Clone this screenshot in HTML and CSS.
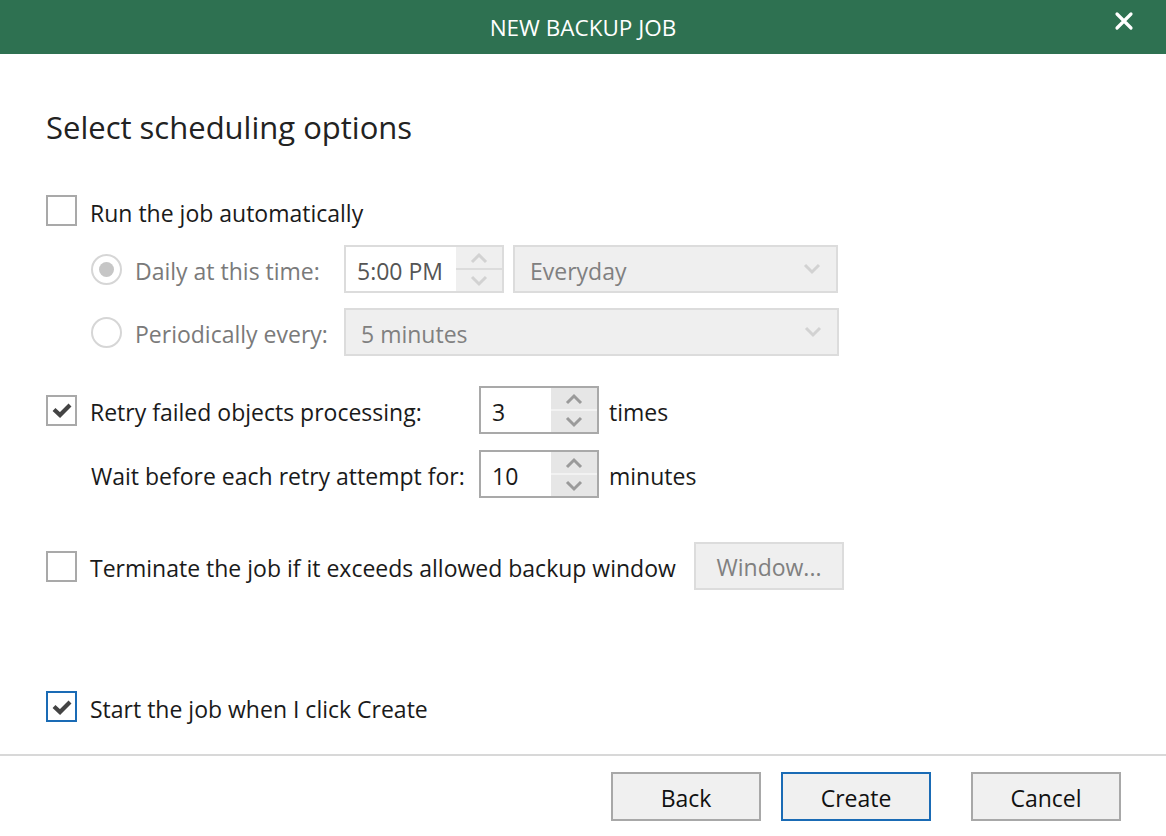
FILE: index.html
```html
<!DOCTYPE html>
<html lang="en">
<head>
    <meta charset="UTF-8">
    <meta name="viewport" content="width=device-width, initial-scale=1.0">
    <title>New Backup Job</title>
    <link rel="stylesheet" href="styles.css">
</head>
<body>
<div class="dialog">
    <div class="titlebar">
        <span class="title">NEW BACKUP JOB</span>
        <button class="close" aria-label="Close">
            <svg width="20" height="20" viewBox="0 0 20 20"><path d="M3 3 L17 17 M17 3 L3 17" stroke="#fff" stroke-width="3.2" stroke-linecap="round"/></svg>
        </button>
    </div>

    <div class="content">
        <h2 class="heading">Select scheduling options</h2>

        <div class="row row-auto">
            <span class="checkbox"></span>
            <span class="label">Run the job automatically</span>
        </div>

        <div class="row row-daily indent disabled">
            <span class="radio checked"></span>
            <span class="label radio-label">Daily at this time:</span>
            <div class="spin spin-time">
                <span class="spin-value">5:00 PM</span>
                <span class="spin-btns">
                    <span class="spin-up"><svg width="20" height="12" viewBox="0 0 20 12"><path d="M3 10 L10 3 L17 10" fill="none" stroke="currentColor" stroke-width="3"/></svg></span>
                    <span class="spin-down"><svg width="20" height="12" viewBox="0 0 20 12"><path d="M3 2 L10 9 L17 2" fill="none" stroke="currentColor" stroke-width="3"/></svg></span>
                </span>
            </div>
            <div class="select select-days">
                <span>Everyday</span>
                <svg width="20" height="12" viewBox="0 0 20 12"><path d="M3 2 L10 9 L17 2" fill="none" stroke="currentColor" stroke-width="3"/></svg>
            </div>
        </div>

        <div class="row row-period indent disabled">
            <span class="radio"></span>
            <span class="label radio-label">Periodically every:</span>
            <div class="select select-period">
                <span>5 minutes</span>
                <svg width="20" height="12" viewBox="0 0 20 12"><path d="M3 2 L10 9 L17 2" fill="none" stroke="currentColor" stroke-width="3"/></svg>
            </div>
        </div>

        <div class="row row-retry">
            <span class="checkbox checked">
                <svg width="20" height="16" viewBox="0 0 20 16"><path d="M2 7.5 L8 13 L18 3" fill="none" stroke="#444" stroke-width="4.2"/></svg>
            </span>
            <span class="label retry-label">Retry failed objects processing:</span>
            <div class="spin spin-num">
                <span class="spin-value">3</span>
                <span class="spin-btns">
                    <span class="spin-up"><svg width="20" height="12" viewBox="0 0 20 12"><path d="M3 10 L10 3 L17 10" fill="none" stroke="currentColor" stroke-width="3"/></svg></span>
                    <span class="spin-down"><svg width="20" height="12" viewBox="0 0 20 12"><path d="M3 2 L10 9 L17 2" fill="none" stroke="currentColor" stroke-width="3"/></svg></span>
                </span>
            </div>
            <span class="label unit">times</span>
        </div>

        <div class="row row-wait">
            <span class="label wait-label">Wait before each retry attempt for:</span>
            <div class="spin spin-num">
                <span class="spin-value">10</span>
                <span class="spin-btns">
                    <span class="spin-up"><svg width="20" height="12" viewBox="0 0 20 12"><path d="M3 10 L10 3 L17 10" fill="none" stroke="currentColor" stroke-width="3"/></svg></span>
                    <span class="spin-down"><svg width="20" height="12" viewBox="0 0 20 12"><path d="M3 2 L10 9 L17 2" fill="none" stroke="currentColor" stroke-width="3"/></svg></span>
                </span>
            </div>
            <span class="label unit">minutes</span>
        </div>

        <div class="row row-terminate">
            <span class="checkbox"></span>
            <span class="label terminate-label">Terminate the job if it exceeds allowed backup window</span>
            <button class="btn btn-disabled">Window...</button>
        </div>

        <div class="row row-start">
            <span class="checkbox checked focused">
                <svg width="20" height="16" viewBox="0 0 20 16"><path d="M2 7.5 L8 13 L18 3" fill="none" stroke="#444" stroke-width="4.2"/></svg>
            </span>
            <span class="label">Start the job when I click Create</span>
        </div>
    </div>

    <div class="footer">
        <button class="btn">Back</button>
        <button class="btn btn-primary">Create</button>
        <button class="btn btn-cancel">Cancel</button>
    </div>
</div>
</body>
</html>
```

FILE: styles.css
```css
body {
    margin: 0;
    font-family: 'Segoe UI', 'Open Sans', 'Noto Sans', sans-serif;
    background-color: #ffffff;
    color: #1a1a1a;
}
.dialog {
    width: 1166px;
    height: 836px;
    display: flex;
    flex-direction: column;
    overflow: hidden;
}
.titlebar {
    height: 54px;
    background-color: #2e7151;
    display: flex;
    align-items: center;
    justify-content: center;
    position: relative;
    flex-shrink: 0;
}
.title {
    color: #ffffff;
    font-size: 22.5px;
    padding-top: 1px;
}
.close {
    position: absolute;
    right: 32px;
    top: 11px;
    width: 20px;
    height: 20px;
    padding: 0;
    border: none;
    background: none;
    display: flex;
}
.content {
    flex: 1;
    padding: 0 46px;
}
.heading {
    margin: 53px 0 0;
    font-size: 31px;
    font-weight: normal;
    line-height: 40px;
    height: 40px;
    color: #222;
}
.row {
    display: flex;
    align-items: center;
}
.indent {
    padding-left: 45px;
}
.label {
    font-size: 23px;
    line-height: 30px;
    padding-top: 4px;
    white-space: nowrap;
}
.disabled .label {
    color: #7a7a7a;
}
.row-auto {
    margin-top: 48px;
    height: 31px;
}
.row-daily {
    margin-top: 19px;
    height: 48px;
}
.row-period {
    margin-top: 15px;
    height: 48px;
}
.row-retry {
    margin-top: 30px;
    height: 48px;
}
.row-wait {
    margin-top: 16px;
    height: 48px;
    padding-left: 45px;
}
.row-terminate {
    margin-top: 44px;
    height: 48px;
}
.row-start {
    margin-top: 101px;
    height: 31px;
}
.checkbox {
    width: 31px;
    height: 31px;
    box-sizing: border-box;
    border: 2px solid #a9a9a9;
    background: #fff;
    display: flex;
    align-items: center;
    justify-content: center;
    flex-shrink: 0;
    margin-right: 13px;
}
.checkbox.focused {
    border-color: #1a6bb5;
}
.radio {
    width: 31px;
    height: 31px;
    box-sizing: border-box;
    border: 2px solid #d6d6d6;
    border-radius: 50%;
    display: flex;
    align-items: center;
    justify-content: center;
    flex-shrink: 0;
    margin-right: 13px;
}
.radio.checked::after {
    content: '';
    width: 15px;
    height: 15px;
    border-radius: 50%;
    background: #c6c6c6;
}
.radio-label {
    width: 209px;
}
.retry-label {
    width: 389px;
}
.wait-label {
    width: 388px;
}
.terminate-label {
    width: 604px;
}
.unit {
    margin-left: 10px;
}
.spin {
    height: 48px;
    box-sizing: border-box;
    display: flex;
    flex-shrink: 0;
}
.spin-value {
    flex: 1;
    font-size: 23px;
    display: flex;
    align-items: center;
    padding: 4px 11px 0;
    background: #fff;
}
.spin-btns {
    width: 46px;
    display: flex;
    flex-direction: column;
}
.spin-up, .spin-down {
    flex: 1;
    display: flex;
    align-items: center;
    justify-content: center;
}
.spin-up {
    border-bottom: 2px solid;
}
.spin-time {
    width: 160px;
    border: 2px solid #dcdcdc;
    color: #dcdcdc;
}
.spin-time .spin-value {
    color: #555;
}
.spin-time .spin-btns {
    background: #efefef;
    color: #d2d2d2;
}
.spin-time .spin-up {
    border-color: #dcdcdc;
}
.spin-num {
    width: 120px;
    border: 2px solid #a9a9a9;
}
.spin-num .spin-value {
    color: #1a1a1a;
}
.spin-num .spin-btns {
    background: #e6e6e6;
    color: #9a9a9a;
}
.spin-num .spin-up {
    border-color: #f2f2f2;
}
.select {
    height: 48px;
    box-sizing: border-box;
    border: 2px solid #dcdcdc;
    background: #efefef;
    display: flex;
    align-items: center;
    justify-content: space-between;
    padding: 4px 14px 0 15px;
    font-size: 23px;
    color: #808080;
}
.select svg {
    color: #d2d2d2;
    margin-top: -4px;
}
.select-days {
    width: 325px;
    margin-left: 9px;
}
.select-period {
    width: 495px;
}
.btn {
    width: 150px;
    height: 49px;
    box-sizing: border-box;
    border: 2px solid #a8a8a8;
    background: #f0f0f0;
    font-family: inherit;
    font-size: 23px;
    color: #111;
    padding: 2px 0 0;
}
.btn-disabled {
    border-color: #dcdcdc;
    background: #efefef;
    color: #808080;
    height: 48px;
}
.btn-primary {
    border-color: #1a6bb5;
}
.footer {
    height: 82px;
    box-sizing: border-box;
    flex-shrink: 0;
    border-top: 2px solid #d8d8d8;
    display: flex;
    justify-content: flex-end;
    align-items: flex-start;
    padding: 16px 45px 0 0;
    gap: 20px;
}
.btn-cancel {
    margin-left: 20px;
}
```
